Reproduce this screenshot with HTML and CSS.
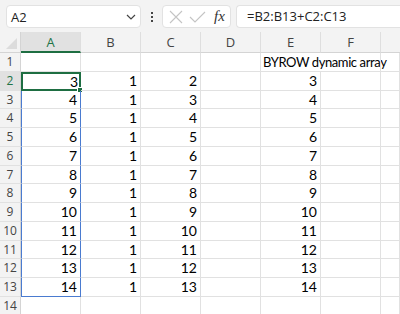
FILE: index.html
```html
<!DOCTYPE html>
<html>
<head>
<meta charset="utf-8">
<link rel="stylesheet" href="styles.css">
</head>
<body>
<div class="app">
  <div class="toolbar">
    <div class="namebox">
      <span class="name">A2</span>
      <svg class="chev" width="10" height="6" viewBox="0 0 10 6"><path d="M1 1 L5 5 L9 1" fill="none" stroke="#444" stroke-width="1.2"/></svg>
    </div>
    <div class="dots"><span></span><span></span><span></span></div>
    <div class="fxbox">
      <svg width="16" height="16" viewBox="0 0 16 16"><path d="M2 2 L14 14 M14 2 L2 14" stroke="#c4c4c4" stroke-width="1.1"/></svg>
      <svg width="18" height="16" viewBox="0 0 18 16"><path d="M2 8 L7 13 L17 3" fill="none" stroke="#c4c4c4" stroke-width="1.1"/></svg>
      <span class="fx">fx</span>
    </div>
    <div class="formula">=B2:B13+C2:C13</div>
  </div>
  <div class="sheet">
    <div class="corner"><span class="tri"></span></div>
    <div class="ch sel">A</div><div class="ch">B</div><div class="ch">C</div><div class="ch">D</div><div class="ch">E</div><div class="ch">F</div><div class="ch last"></div>

    <div class="rh">1</div><div class="c a"></div><div class="c"></div><div class="c"></div><div class="c"></div><div class="c e txt">BYROW dynamic array</div><div class="c"></div><div class="c"></div>
    <div class="rh sel">2</div><div class="c a active">3<span class="handle"></span></div><div class="c">1</div><div class="c">2</div><div class="c"></div><div class="c">3</div><div class="c"></div><div class="c"></div>
    <div class="rh">3</div><div class="c a sp">4</div><div class="c">1</div><div class="c">3</div><div class="c"></div><div class="c">4</div><div class="c"></div><div class="c"></div>
    <div class="rh">4</div><div class="c a sp">5</div><div class="c">1</div><div class="c">4</div><div class="c"></div><div class="c">5</div><div class="c"></div><div class="c"></div>
    <div class="rh">5</div><div class="c a sp">6</div><div class="c">1</div><div class="c">5</div><div class="c"></div><div class="c">6</div><div class="c"></div><div class="c"></div>
    <div class="rh">6</div><div class="c a sp">7</div><div class="c">1</div><div class="c">6</div><div class="c"></div><div class="c">7</div><div class="c"></div><div class="c"></div>
    <div class="rh">7</div><div class="c a sp">8</div><div class="c">1</div><div class="c">7</div><div class="c"></div><div class="c">8</div><div class="c"></div><div class="c"></div>
    <div class="rh">8</div><div class="c a sp">9</div><div class="c">1</div><div class="c">8</div><div class="c"></div><div class="c">9</div><div class="c"></div><div class="c"></div>
    <div class="rh">9</div><div class="c a sp">10</div><div class="c">1</div><div class="c">9</div><div class="c"></div><div class="c">10</div><div class="c"></div><div class="c"></div>
    <div class="rh">10</div><div class="c a sp">11</div><div class="c">1</div><div class="c">10</div><div class="c"></div><div class="c">11</div><div class="c"></div><div class="c"></div>
    <div class="rh">11</div><div class="c a sp">12</div><div class="c">1</div><div class="c">11</div><div class="c"></div><div class="c">12</div><div class="c"></div><div class="c"></div>
    <div class="rh">12</div><div class="c a sp">13</div><div class="c">1</div><div class="c">12</div><div class="c"></div><div class="c">13</div><div class="c"></div><div class="c"></div>
    <div class="rh">13</div><div class="c a sp spb">14</div><div class="c">1</div><div class="c">13</div><div class="c"></div><div class="c">14</div><div class="c"></div><div class="c"></div>
    <div class="rh">14</div><div class="c a"></div><div class="c"></div><div class="c"></div><div class="c"></div><div class="c"></div><div class="c"></div><div class="c"></div>
  </div>
</div>
</body>
</html>
```
FILE: styles.css
```css
* { box-sizing: border-box; }
html, body { margin: 0; padding: 0; }
body { width: 400px; height: 314px; overflow: hidden; background: #fff; font-family: "Open Sans", "Noto Sans", sans-serif; }
.app { width: 400px; height: 314px; overflow: hidden; }

.toolbar { height: 32px; background: #f3f3f3; display: flex; align-items: center; padding: 5px 0 4px 6px; gap: 0; }
.namebox { width: 135px; height: 23px; background: #fff; border: 1px solid #e2e2e2; border-radius: 4px; display: flex; align-items: center; justify-content: space-between; padding: 0 4px 0 4px; }
.name { font-size: 13px; color: #222; }
.chev { margin-right: 0; }
.dots { width: 21px; display: flex; flex-direction: column; align-items: center; gap: 2px; }
.dots span { width: 2px; height: 2px; background: #444; display: block; }
.fxbox { width: 69px; height: 23px; background: #fff; border: 1px solid #e2e2e2; border-radius: 4px; display: flex; align-items: center; padding: 0 3px 0 5px; gap: 4px; }
.fx { font-family: "Liberation Serif", serif; font-style: italic; font-size: 15px; color: #333; margin-left: 4px; }
.formula { flex: 1; height: 23px; margin-left: 5px; background: #fff; border: 1px solid #e2e2e2; border-right: none; border-radius: 4px 0 0 4px; font-size: 13px; color: #222; line-height: 21px; padding-left: 10px; }

.sheet { display: grid; grid-template-columns: 21px repeat(6, 60px) 19px; grid-template-rows: 21px repeat(14, 18.77px); }
.corner { background: #f3f3f3; border-right: 1px solid #d4d4d4; border-bottom: 1px solid #d4d4d4; position: relative; }
.tri { position: absolute; right: 3px; bottom: 3px; width: 0; height: 0; border-left: 11px solid transparent; border-bottom: 11px solid #dcdcdc; }
.ch { background: #f3f3f3; border-right: 1px solid #dedede; border-bottom: 1px solid #d4d4d4; font-size: 13px; color: #444; text-align: center; line-height: 20px; }
.ch.sel { background: #e1e1e1; color: #217346; border-bottom: 2px solid #1e6e42; }
.ch.last { border-right: none; }
.rh { background: #f3f3f3; border-right: 1px solid #d4d4d4; border-bottom: 1px solid #e1e1e1; font-size: 12px; color: #444; text-align: center; line-height: 18px; }
.rh.sel { background: #e1e1e1; color: #217346; }
.c { border-right: 1px solid #e1e1e1; border-bottom: 1px solid #e1e1e1; font-family: "Lato", "Open Sans", sans-serif; font-size: 14px; color: #000; text-align: right; padding-right: 3px; line-height: 18px; position: relative; white-space: nowrap; }
.c.txt { text-align: left; padding-left: 2px; overflow: visible; border-right: none; font-size: 13px; letter-spacing: -0.4px; }
.c.sp { border-left: 1px solid #4a7bd0; border-right: 1px solid #4a7bd0; }
.c.spb { border-bottom: 1px solid #4a7bd0; }
.c.active { border: 2px solid #1e6e42; line-height: 15px; padding-right: 1px; }
.handle { position: absolute; right: -4px; bottom: -4px; width: 6px; height: 6px; background: #1e6e42; border: 1px solid #fff; }
```
